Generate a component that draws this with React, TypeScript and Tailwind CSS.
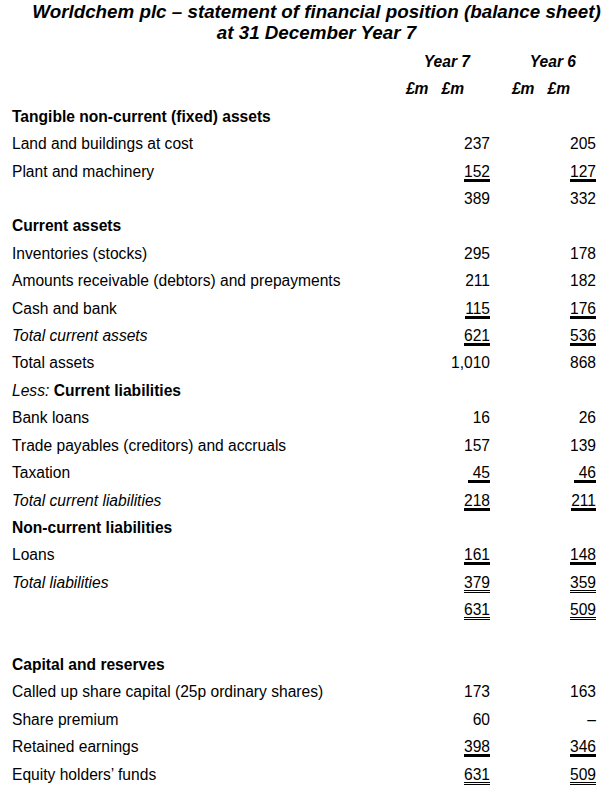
type Line = "none" | "single" | "double";

type Row = {
  label?: React.ReactNode;
  y7?: string;
  y6?: string;
  u?: Line;
};

const rows: Row[] = [
  { label: <span className="font-bold">Tangible non-current (fixed) assets</span> },
  { label: "Land and buildings at cost", y7: "237", y6: "205" },
  { label: "Plant and machinery", y7: "152", y6: "127", u: "single" },
  { y7: "389", y6: "332" },
  { label: <span className="font-bold">Current assets</span> },
  { label: "Inventories (stocks)", y7: "295", y6: "178" },
  { label: "Amounts receivable (debtors) and prepayments", y7: "211", y6: "182" },
  { label: "Cash and bank", y7: "115", y6: "176", u: "single" },
  { label: <span className="italic">Total current assets</span>, y7: "621", y6: "536", u: "single" },
  { label: "Total assets", y7: "1,010", y6: "868" },
  {
    label: (
      <>
        <span className="italic">Less:</span> <span className="font-bold">Current liabilities</span>
      </>
    ),
  },
  { label: "Bank loans", y7: "16", y6: "26" },
  { label: "Trade payables (creditors) and accruals", y7: "157", y6: "139" },
  { label: "Taxation", y7: "\u00a045", y6: "\u00a046", u: "single" },
  { label: <span className="italic">Total current liabilities</span>, y7: "218", y6: "211", u: "single" },
  { label: <span className="font-bold">Non-current liabilities</span> },
  { label: "Loans", y7: "161", y6: "148", u: "single" },
  { label: <span className="italic">Total liabilities</span>, y7: "379", y6: "359", u: "double" },
  { y7: "631", y6: "509", u: "double" },
  {},
  { label: <span className="font-bold">Capital and reserves</span> },
  { label: "Called up share capital (25p ordinary shares)", y7: "173", y6: "163" },
  { label: "Share premium", y7: "60", y6: "–" },
  { label: "Retained earnings", y7: "398", y6: "346", u: "single" },
  { label: "Equity holders’ funds", y7: "631", y6: "509", u: "double" },
];

function Amount({ v, u }: { v?: string; u?: Line }) {
  if (!v) return <span />;
  if (u === "single")
    return <span className="inline-block leading-[15px] border-b-[3px] border-black">{v}</span>;
  if (u === "double")
    return <span className="inline-block leading-[15px] border-b-[3px] border-double border-black">{v}</span>;
  return <span>{v}</span>;
}

export default function App() {
  return (
    <div
      className="w-[615px] h-[793px] bg-white text-black overflow-hidden"
      style={{ fontFamily: '"Liberation Sans", Arial, sans-serif' }}
    >
      <div className="pl-[18px] text-center text-[18.8px] leading-[21px] font-bold italic pt-px">
        <div>Worldchem plc – statement of financial position (balance sheet)</div>
        <div>at 31 December Year 7</div>
      </div>

      <div className="mt-[5px] pr-[19px] pl-[12px] text-[15.6px]">
        <div className="grid grid-cols-[1fr_106px_106px] h-[27.42px] items-center font-bold italic">
          <span />
          <span className="text-right pr-[20px]">Year 7</span>
          <span className="text-right pr-[20px]">Year 6</span>
        </div>
        <div className="grid grid-cols-[1fr_106px_106px] h-[27.42px] items-center font-bold italic">
          <span />
          <span className="flex justify-end gap-[13px] pr-[26px]">
            <span>£m</span>
            <span>£m</span>
          </span>
          <span className="flex justify-end gap-[13px] pr-[26px]">
            <span>£m</span>
            <span>£m</span>
          </span>
        </div>

        {rows.map((r, i) => (
          <div key={i} className="grid grid-cols-[1fr_106px_106px] h-[27.42px] items-center">
            <span className="whitespace-nowrap">{r.label}</span>
            <span className="text-right">
              <Amount v={r.y7} u={r.u} />
            </span>
            <span className="text-right">
              <Amount v={r.y6} u={r.u} />
            </span>
          </div>
        ))}
      </div>
    </div>
  );
}
